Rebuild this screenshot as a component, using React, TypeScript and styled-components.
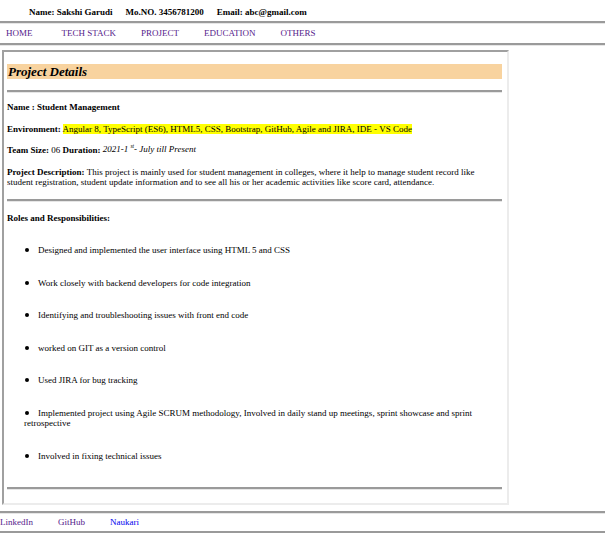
import * as React from 'react'
import styled, { createGlobalStyle } from 'styled-components'

const GlobalStyle = createGlobalStyle`
  body {
    margin: 0;
    background: #ffffff;
    font-family: 'Liberation Serif', 'Times New Roman', serif;
    color: #000000;
  }
`

const Rule = styled.hr`
  margin: 0;
  height: 0;
  border: none;
  border-top: 2px solid #9a9a9a;
  border-bottom: 1px solid #e6e6e6;
`

const ContactBar = styled.div`
  display: flex;
  gap: 13px;
  padding: 7px 0 4px 29px;
  font-size: 9px;
  font-weight: bold;
  line-height: 10px;
`

const NavBar = styled.nav`
  display: flex;
  gap: 25px;
  padding: 4px 0 5px 6px;
  font-size: 9px;
  line-height: 10px;
  a:first-child {
    margin-right: 4px;
  }
`

const NavLink = styled.a<{ $fresh?: boolean }>`
  color: ${props => (props.$fresh ? '#0000ee' : '#551a8b')};
  text-decoration: none;
`

const Panel = styled.section`
  width: 495px;
  margin: 4px 0 6px 2px;
  padding: 12px 5px 13px 3px;
  border: 2px solid;
  border-color: #a0a0a0 #ececec #ececec #a0a0a0;
`

const Heading = styled.h2`
  margin: 0 0 11px;
  padding: 0 1px;
  background: #f8d39f;
  font-size: 13px;
  font-style: italic;
  font-weight: bold;
  line-height: 15px;
`

const Line = styled.p<{ $first?: boolean }>`
  margin: ${props => (props.$first ? '9px' : '11px')} 0 11px;
  font-size: 9px;
  line-height: 10.5px;
`

const Label = styled.b``

const Marked = styled.span`
  background: #ffff00;
`

const Dates = styled.i`
  font-size: 9px;
  line-height: 1;
  vertical-align: 1px;
  sup {
    font-size: 5.5px;
    line-height: 0;
  }
`

const List = styled.ul`
  list-style: none;
  margin: 22px 0 26px;
  padding: 0 0 0 17px;
`

const Item = styled.li`
  margin: 22px 0 0;
  font-size: 9px;
  line-height: 10.5px;
  &:first-child {
    margin-top: 0;
  }
`

const Bullet = styled.span`
  display: inline-block;
  width: 4px;
  height: 4px;
  margin: 0 9px 1px 1px;
  border-radius: 50%;
  background: #000000;
  vertical-align: middle;
`

const Footer = styled.footer`
  display: flex;
  gap: 25px;
  padding: 3px 0 4px 0;
  font-size: 9px;
  line-height: 10px;
`

const duties = [
  'Designed and implemented the user interface using HTML 5 and CSS',
  'Work closely with backend developers for code integration',
  'Identifying and troubleshooting issues with front end code',
  'worked on GIT as a version control',
  'Used JIRA for bug tracking',
  'Implemented project using Agile SCRUM methodology, Involved in daily stand up meetings, sprint showcase and sprint retrospective',
  'Involved in fixing technical issues',
]

export default function App(): JSX.Element {
  return (
    <>
      <GlobalStyle />
      <ContactBar>
        <span>Name: Sakshi Garudi</span>
        <span>Mo.NO. 3456781200</span>
        <span>Email: abc@gmail.com</span>
      </ContactBar>
      <Rule />
      <NavBar>
        <NavLink href="#home">HOME</NavLink>
        <NavLink href="#tech">TECH STACK</NavLink>
        <NavLink href="#project">PROJECT</NavLink>
        <NavLink href="#education">EDUCATION</NavLink>
        <NavLink href="#others">OTHERS</NavLink>
      </NavBar>
      <Rule />
      <Panel>
        <Heading>Project Details</Heading>
        <Rule />
        <Line $first>
          <Label>Name : Student Management</Label>
        </Line>
        <Line>
          <Label>Environment:</Label>{' '}
          <Marked>
            Angular 8, TypeScript (ES6), HTML5, CSS, Bootstrap, GitHub, Agile
            and JIRA, IDE - VS Code
          </Marked>
        </Line>
        <Line>
          <Label>Team Size:</Label> 06 <Label>Duration:</Label>{' '}
          <Dates>
            2021-1 <sup>st</sup>- July till Present
          </Dates>
        </Line>
        <Line>
          <Label>Project Description:</Label> This project is mainly used for
          student management in colleges, where it help to manage student
          record like student registration, student update information and to
          see all his or her academic activities like score card, attendance.
        </Line>
        <Rule />
        <Line>
          <Label>Roles and Responsibilities:</Label>
        </Line>
        <List>
          {duties.map(duty => (
            <Item key={duty}>
              <Bullet />
              {duty}
            </Item>
          ))}
        </List>
        <Rule />
      </Panel>
      <Rule />
      <Footer>
        <NavLink href="#linkedin">LinkedIn</NavLink>
        <NavLink href="#github">GitHub</NavLink>
        <NavLink href="#naukari" $fresh>
          Naukari
        </NavLink>
      </Footer>
      <Rule />
    </>
  )
}
